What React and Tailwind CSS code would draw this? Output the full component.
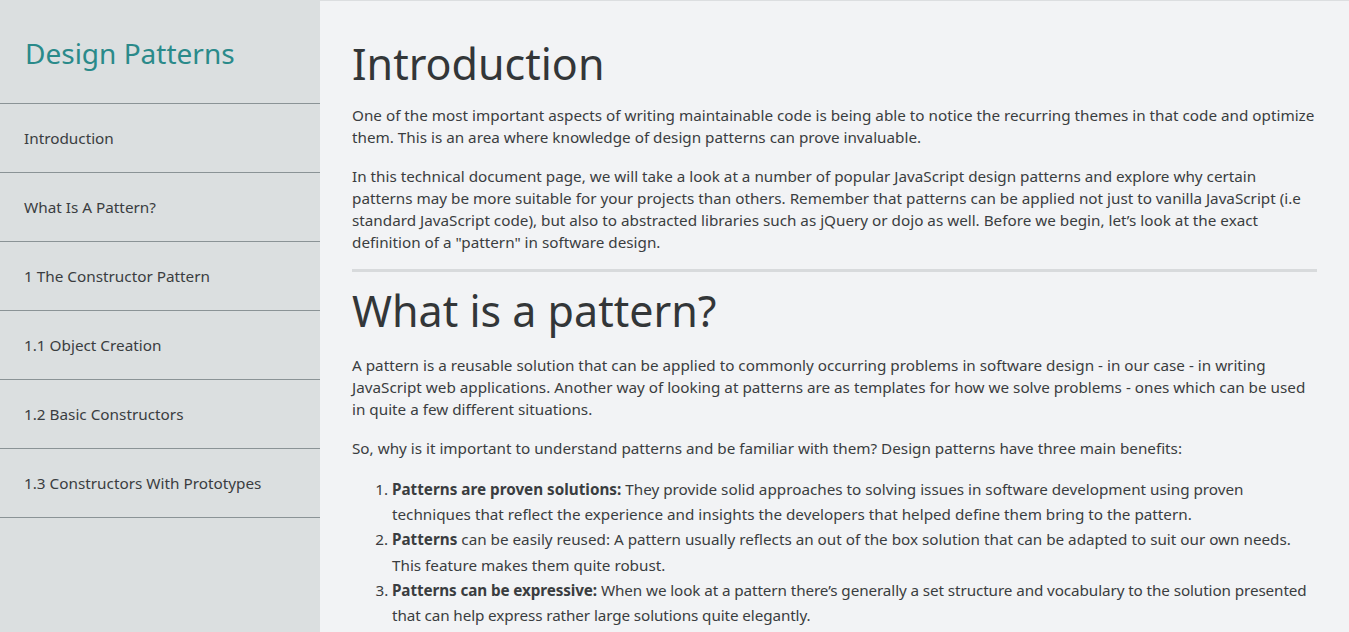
const navItems = [
  'Introduction',
  'What Is A Pattern?',
  '1 The Constructor Pattern',
  '1.1 Object Creation',
  '1.2 Basic Constructors',
  '1.3 Constructors With Prototypes',
];

const font = { fontFamily: '"Noto Sans", "Open Sans", sans-serif' };

export default function App() {
  return (
    <div className="flex h-screen overflow-hidden bg-[#f2f3f5] text-[#3a3d40]" style={font}>
      <nav className="w-[320px] shrink-0 bg-[#dbdfe0] h-full">
        <header className="h-[104px] border-b border-[#8a9396] flex items-center px-[25px]">
          <h1 className="text-[28px] text-[#2a8a8a] leading-none pt-[2px]">Design Patterns</h1>
        </header>
        <ul>
          {navItems.map((item) => (
            <li key={item} className="h-[69px] border-b border-[#8a9396] flex items-center px-6 text-[15.3px]">
              {item}
            </li>
          ))}
        </ul>
      </nav>
      <main className="flex-1 overflow-hidden border-t border-[#dcdee0] px-8 text-[15.25px]">
        <section>
          <h2 className="text-[43px] leading-none pt-[41px] pb-[19px] text-[#333638]">Introduction</h2>
          <p className="leading-[22px] mb-[17px]">
            One of the most important aspects of writing maintainable code is being able to notice the recurring themes in that code and optimize them. This is an area where knowledge of design patterns can prove invaluable.
          </p>
          <p className="leading-[22px]">
            In this technical document page, we will take a look at a number of popular JavaScript design patterns and explore why certain patterns may be more suitable for your projects than others. Remember that patterns can be applied not just to vanilla JavaScript (i.e standard JavaScript code), but also to abstracted libraries such as jQuery or dojo as well. Before we begin, let’s look at the exact definition of a "pattern" in software design.
          </p>
        </section>
        <hr className="border-0 h-[3px] bg-[#d8dadc] mt-[16px]" />
        <section>
          <h2 className="text-[43px] leading-none pt-[17px] pb-[22px] text-[#333638]">What is a pattern?</h2>
          <p className="leading-[22px] mb-[17px]">
            A pattern is a reusable solution that can be applied to commonly occurring problems in software design - in our case - in writing JavaScript web applications. Another way of looking at patterns are as templates for how we solve problems - ones which can be used in quite a few different situations.
          </p>
          <p className="leading-[22px] mb-[18px]">
            So, why is it important to understand patterns and be familiar with them? Design patterns have three main benefits:
          </p>
          <ol className="list-decimal pl-10 leading-[25.2px]">
            <li>
              <strong>Patterns are proven solutions:</strong> They provide solid approaches to solving issues in software development using proven techniques that reflect the experience and insights the developers that helped define them bring to the pattern.
            </li>
            <li>
              <strong>Patterns</strong> can be easily reused: A pattern usually reflects an out of the box solution that can be adapted to suit our own needs. This feature makes them quite robust.
            </li>
            <li className="tracking-[-0.1px]">
              <strong>Patterns can be expressive:</strong> When we look at a pattern there’s generally a set structure and vocabulary to the solution presented that can help express rather large solutions quite elegantly.
            </li>
          </ol>
        </section>
      </main>
    </div>
  );
}
